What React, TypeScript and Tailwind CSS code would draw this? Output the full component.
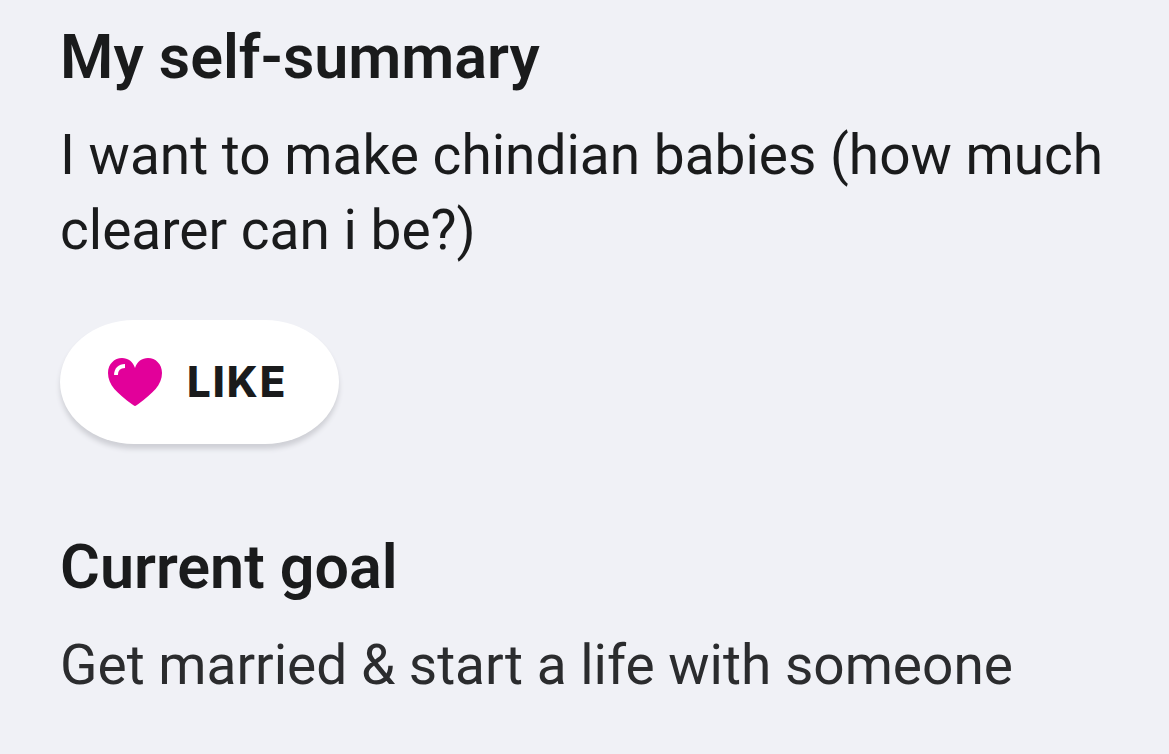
type Essay = {
  title: string;
  body: string;
  likeable?: boolean;
};

const essays: Essay[] = [
  {
    title: "My self-summary",
    body: "I want to make chindian babies (how much clearer can i be?)",
    likeable: true,
  },
  {
    title: "Current goal",
    body: "Get married & start a life with someone",
  },
];

function HeartIcon() {
  return (
    <svg viewBox="0 0 54 48" className="w-[54px] h-12" aria-hidden="true">
      <path
        d="M27 48C26 48 25 47 24 46.300C9 35 0 27 0 15C0 6 6.500 0 14 0C20 0 25 3.500 27 10C29 3.500 34 0 40 0C47.500 0 54 6 54 15C54 27 45 35 30 46.300C29 47 28 48 27 48Z"
        fill="#e2009a"
      />
      <path d="M8 17C8 11.500 11.500 8 17 8" fill="none" stroke="#fff" strokeWidth="3.800" />
    </svg>
  );
}

function LikeButton() {
  return (
    <button
      type="button"
      className="mt-[52px] flex items-center gap-[25px] h-[124px] pl-12 pr-[52px] rounded-[74px/62px] bg-white shadow-[0_5px_5px_#cfd0d6]"
    >
      <HeartIcon />
      <span className="font-['Inter',sans-serif] text-[42px] leading-[42px] font-extrabold tracking-[2px]">LIKE</span>
    </button>
  );
}

export default function App() {
  return (
    <main className="min-h-screen bg-[#f0f1f6] px-[60px] pt-5 font-['Roboto',sans-serif] text-[#1a1b1c]">
      {essays.map((essay, i) => (
        <section key={essay.title} className={i > 0 ? "mt-[86px]" : ""}>
          <h2 className="text-[61px] leading-[74px] font-semibold">{essay.title}</h2>
          <p className={`mt-6 text-[55px] leading-[75px] ${essay.likeable ? "" : "text-[#2b2c2e]"}`}>{essay.body}</p>
          {essay.likeable && <LikeButton />}
        </section>
      ))}
    </main>
  );
}
